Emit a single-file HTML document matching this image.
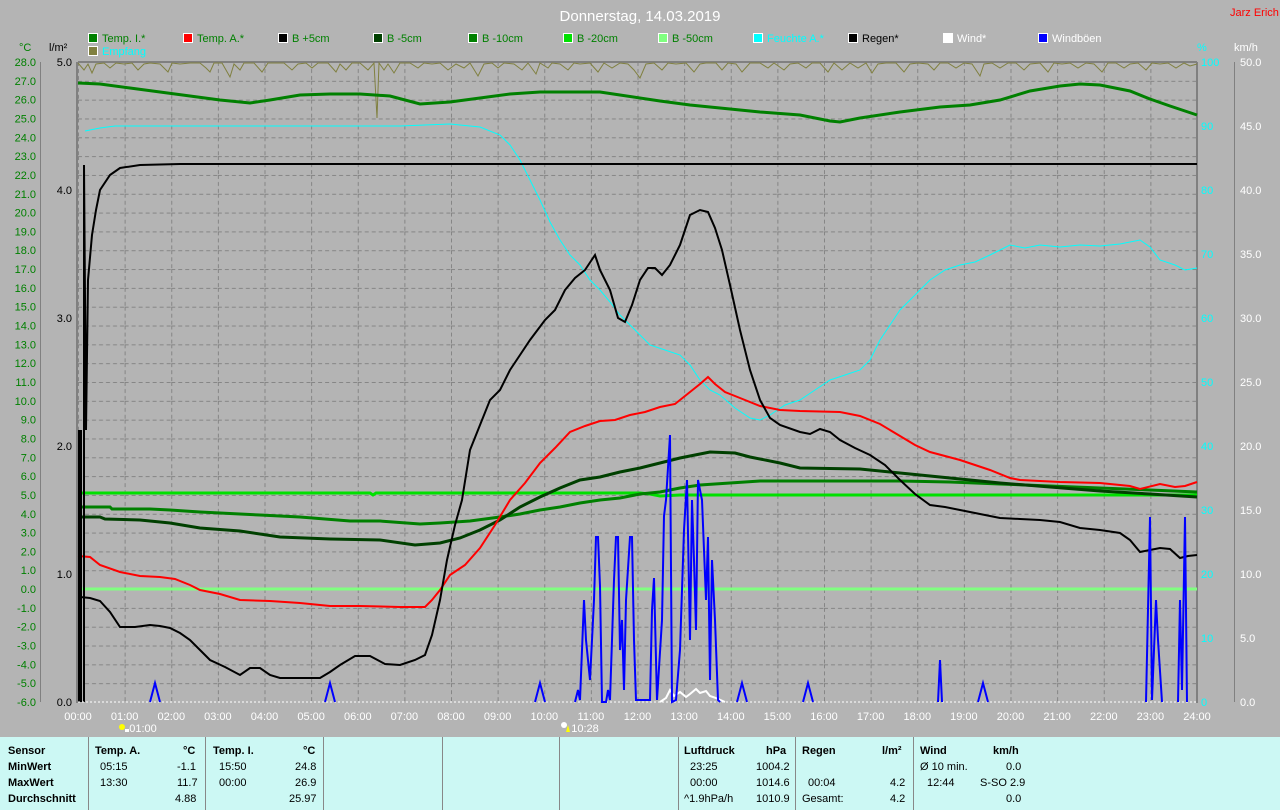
<!DOCTYPE html>
<html><head><meta charset="utf-8"><style>
html,body{margin:0;padding:0;background:#b4b4b4;width:1280px;height:810px;overflow:hidden}
svg{display:block;font-family:"Liberation Sans",sans-serif}
.tb{position:absolute;left:0;top:737px;width:1280px;height:73px;background:#ccf8f4;font-family:"Liberation Sans",sans-serif;font-size:11px;color:#000}
.tb div{position:absolute;white-space:nowrap}
.b{font-weight:bold}
.sep{position:absolute;top:0;width:1px;height:73px;background:#888}
</style></head><body>
<svg width="1280" height="737" viewBox="0 0 1280 737">
<defs>
<pattern id="g" x="78" y="62" width="46.625" height="18.8235" patternUnits="userSpaceOnUse">
<line x1="0" y1="0.5" x2="46.625" y2="0.5" stroke="#858585" stroke-dasharray="4,3"/>
<line x1="0.5" y1="0" x2="0.5" y2="18.8235" stroke="#858585" stroke-dasharray="4,3"/>
</pattern>
</defs>
<rect width="1280" height="737" fill="#b4b4b4"/>
<rect x="78" y="62" width="1119" height="640" fill="url(#g)"/>
<text x="640" y="21" fill="#fff" font-size="15" text-anchor="middle">Donnerstag, 14.03.2019</text>
<text x="1230" y="16" fill="#f00" font-size="11">Jarz Erich</text>
<g font-size="11">
<rect x="88.5" y="33.5" width="9" height="9" fill="#008000" stroke="#fff"/><text x="102" y="42" fill="#008000">Temp. I.*</text>
<rect x="183.5" y="33.5" width="9" height="9" fill="#f00" stroke="#fff"/><text x="197" y="42" fill="#008000">Temp. A.*</text>
<rect x="278.5" y="33.5" width="9" height="9" fill="#000" stroke="#fff"/><text x="292" y="42" fill="#008000">B +5cm</text>
<rect x="373.5" y="33.5" width="9" height="9" fill="#004000" stroke="#fff"/><text x="387" y="42" fill="#008000">B -5cm</text>
<rect x="468.5" y="33.5" width="9" height="9" fill="#008000" stroke="#fff"/><text x="482" y="42" fill="#008000">B -10cm</text>
<rect x="563.5" y="33.5" width="9" height="9" fill="#00e000" stroke="#fff"/><text x="577" y="42" fill="#008000">B -20cm</text>
<rect x="658.5" y="33.5" width="9" height="9" fill="#80ff80" stroke="#fff"/><text x="672" y="42" fill="#008000">B -50cm</text>
<rect x="753.5" y="33.5" width="9" height="9" fill="#0ff" stroke="#fff"/><text x="767" y="42" fill="#0ff">Feuchte A.*</text>
<rect x="848.5" y="33.5" width="9" height="9" fill="#000" stroke="#fff"/><text x="862" y="42" fill="#000">Regen*</text>
<rect x="943.5" y="33.5" width="9" height="9" fill="#fff" stroke="#fff"/><text x="957" y="42" fill="#fff">Wind*</text>
<rect x="1038.5" y="33.5" width="9" height="9" fill="#00f" stroke="#fff"/><text x="1052" y="42" fill="#fff">Windböen</text>
<rect x="88.5" y="46.5" width="9" height="9" fill="#808040" stroke="#fff"/><text x="102" y="55" fill="#0ff">Empfang</text>
<text x="19" y="51" fill="#008000">°C</text>
<text x="49" y="51" fill="#000">l/m²</text>
<text x="1197" y="51" fill="#0ff">%</text>
<text x="1234" y="51" fill="#fff">km/h</text>
</g>
<!-- axes -->
<line x1="40.5" y1="62" x2="40.5" y2="702" stroke="#808080"/>
<line x1="77" y1="62" x2="77" y2="703" stroke="#808080" stroke-width="2"/>
<line x1="78" y1="62" x2="1197" y2="62" stroke="#808080" stroke-width="2"/>
<line x1="1197" y1="62" x2="1197" y2="703" stroke="#808080" stroke-width="2"/>
<line x1="1234.5" y1="62" x2="1234.5" y2="702" stroke="#808080"/>
<g font-size="11" fill="#008000" text-anchor="end">
<text x="36" y="66">28.0</text><text x="36" y="84.8">27.0</text><text x="36" y="103.6">26.0</text><text x="36" y="122.5">25.0</text><text x="36" y="141.3">24.0</text><text x="36" y="160.1">23.0</text><text x="36" y="178.9">22.0</text><text x="36" y="197.8">21.0</text><text x="36" y="216.6">20.0</text><text x="36" y="235.4">19.0</text><text x="36" y="254.2">18.0</text><text x="36" y="273.1">17.0</text><text x="36" y="291.9">16.0</text><text x="36" y="310.7">15.0</text><text x="36" y="329.5">14.0</text><text x="36" y="348.4">13.0</text><text x="36" y="367.2">12.0</text><text x="36" y="386">11.0</text><text x="36" y="404.8">10.0</text><text x="36" y="423.6">9.0</text><text x="36" y="442.5">8.0</text><text x="36" y="461.3">7.0</text><text x="36" y="480.1">6.0</text><text x="36" y="498.9">5.0</text><text x="36" y="517.8">4.0</text><text x="36" y="536.6">3.0</text><text x="36" y="555.4">2.0</text><text x="36" y="574.2">1.0</text><text x="36" y="593.1">0.0</text><text x="36" y="611.9">-1.0</text><text x="36" y="630.7">-2.0</text><text x="36" y="649.5">-3.0</text><text x="36" y="668.4">-4.0</text><text x="36" y="687.2">-5.0</text><text x="36" y="706">-6.0</text>
</g>
<g font-size="11" fill="#000" text-anchor="end">
<text x="72" y="66">5.0</text><text x="72" y="194">4.0</text><text x="72" y="322">3.0</text><text x="72" y="450">2.0</text><text x="72" y="578">1.0</text><text x="72" y="706">0.0</text>
</g>
<g font-size="11" fill="#0ff">
<text x="1201" y="66">100</text><text x="1201" y="130">90</text><text x="1201" y="194">80</text><text x="1201" y="258">70</text><text x="1201" y="322">60</text><text x="1201" y="386">50</text><text x="1201" y="450">40</text><text x="1201" y="514">30</text><text x="1201" y="578">20</text><text x="1201" y="642">10</text><text x="1201" y="706">0</text>
</g>
<g font-size="11" fill="#fff">
<text x="1240" y="66">50.0</text><text x="1240" y="130">45.0</text><text x="1240" y="194">40.0</text><text x="1240" y="258">35.0</text><text x="1240" y="322">30.0</text><text x="1240" y="386">25.0</text><text x="1240" y="450">20.0</text><text x="1240" y="514">15.0</text><text x="1240" y="578">10.0</text><text x="1240" y="642">5.0</text><text x="1240" y="706">0.0</text>
</g>
<g font-size="11" fill="#fff" text-anchor="middle">
<text x="78" y="720">00:00</text><text x="124.6" y="720">01:00</text><text x="171.3" y="720">02:00</text><text x="217.9" y="720">03:00</text><text x="264.5" y="720">04:00</text><text x="311.1" y="720">05:00</text><text x="357.8" y="720">06:00</text><text x="404.4" y="720">07:00</text><text x="451" y="720">08:00</text><text x="497.6" y="720">09:00</text><text x="544.3" y="720">10:00</text><text x="590.9" y="720">11:00</text><text x="637.5" y="720">12:00</text><text x="684.1" y="720">13:00</text><text x="730.8" y="720">14:00</text><text x="777.4" y="720">15:00</text><text x="824" y="720">16:00</text><text x="870.6" y="720">17:00</text><text x="917.3" y="720">18:00</text><text x="963.9" y="720">19:00</text><text x="1010.5" y="720">20:00</text><text x="1057.1" y="720">21:00</text><text x="1103.8" y="720">22:00</text><text x="1150.4" y="720">23:00</text><text x="1197" y="720">24:00</text>
<text x="143" y="732">01:00</text><text x="585" y="732">10:28</text>
</g>
<circle cx="122" cy="727" r="3" fill="#ff0"/><rect x="125" y="729" width="4" height="3" fill="#fff"/>
<circle cx="564" cy="725" r="3" fill="#fff"/><path d="M566 732 L568 725 L570 732Z" fill="#ff0"/>
<!-- Empfang -->
<polyline fill="none" stroke="#808040" stroke-width="1" points="78,63 84,70 88,64 92,73 96,64 104,63 110,68 116,63 124,64 132,63 138,70 144,64 150,63 160,64 168,72 172,63 180,64 190,63 200,63 206,68 210,72 214,63 222,63 230,77 234,64 240,70 244,63 254,63 262,72 268,63 274,63 284,63 292,70 298,64 306,63 312,68 318,63 328,63 336,72 340,64 346,70 352,63 360,63 368,70 374,63 377,118 379,63 384,70 388,64 394,73 400,63 410,63 418,68 424,63 432,64 440,63 448,70 456,64 464,68 470,63 478,76 484,64 492,63 498,68 504,63 514,64 522,70 528,63 536,74 540,63 548,68 552,63 560,64 568,70 574,63 580,64 590,63 598,72 604,63 612,68 620,63 628,64 634,70 640,78 646,64 654,63 662,70 668,63 676,64 686,63 694,72 700,64 706,63 716,63 722,70 728,63 736,64 742,72 750,63 760,63 768,68 774,63 784,70 790,64 798,63 806,68 812,63 820,63 828,72 834,63 842,70 850,63 858,68 866,63 872,73 878,64 886,63 896,63 904,72 910,64 918,63 928,64 934,70 940,63 948,63 956,68 964,63 972,64 980,76 984,64 992,63 1000,68 1008,63 1016,63 1024,70 1030,64 1040,63 1048,72 1054,63 1062,64 1070,63 1078,68 1086,63 1094,64 1102,72 1108,63 1116,63 1124,68 1130,64 1138,63 1146,70 1152,63 1160,64 1168,63 1176,68 1184,63 1190,66 1197,64"/>
<!-- Feuchte -->
<polyline fill="none" stroke="#0ff" stroke-width="1" points="85,131 100,128 115,126 200,126 300,126 400,126 450,124 480,127 500,135 510,145 520,160 530,180 540,200 550,222 560,240 570,255 580,265 590,280 600,290 610,302 620,315 635,330 650,345 665,350 680,355 690,365 700,380 710,390 720,395 735,408 750,418 760,420 770,415 785,405 800,400 815,390 830,380 845,375 860,370 870,360 880,340 890,325 900,310 915,295 930,280 945,270 960,265 975,262 990,255 1000,250 1010,245 1025,248 1040,245 1060,247 1080,245 1100,246 1120,244 1140,240 1150,247 1160,260 1175,265 1185,270 1197,268"/>
<!-- B -50cm -->
<line x1="78" y1="589" x2="1197" y2="589" stroke="#80ff80" stroke-width="3"/>
<!-- B -20cm -->
<polyline fill="none" stroke="#00e000" stroke-width="3" points="78,493 370,493 373,495 376,493 640,493 650,494 660,496 680,495 1197,495"/>
<!-- B -10cm -->
<polyline fill="none" stroke="#008000" stroke-width="3" points="78,507 110,507 112,509 150,509 170,510 200,512 240,514 260,515 300,517 350,521 380,521 420,524 440,523 470,521 500,517 520,514 540,510 560,507 580,503 600,500 620,498 640,494 660,492 680,488 700,485 730,483 760,481 800,481 900,481 950,482 1000,484 1050,486 1100,488 1150,490 1197,492"/>
<!-- B -5cm -->
<polyline fill="none" stroke="#004000" stroke-width="3" points="78,517 100,517 105,519 140,520 170,523 200,528 240,531 280,537 330,539 380,540 415,545 440,543 460,538 480,530 500,520 520,507 540,497 560,488 580,480 600,477 620,472 640,468 660,463 680,458 700,454 710,452 735,453 750,457 780,463 800,468 860,469 900,473 950,478 1000,483 1050,487 1100,491 1150,494 1197,497"/>
<!-- Temp I -->
<polyline fill="none" stroke="#008000" stroke-width="3" points="78,83 100,84 130,88 160,92 190,96 220,100 250,103 270,100 300,95 330,94 360,94 390,96 420,104 450,102 480,98 510,94 540,92 600,92 620,95 660,101 690,105 720,108 760,112 800,115 830,121 840,122 860,118 900,112 940,107 970,105 1000,100 1030,91 1060,86 1080,84 1100,85 1130,91 1150,99 1170,106 1197,115"/>
<!-- Temp A -->
<polyline fill="none" stroke="#f00" stroke-width="2" points="78,556 90,557 100,565 120,572 140,576 160,577 175,579 190,585 200,590 220,594 240,600 270,601 300,603 330,606 360,606 400,607 425,607 432,600 440,590 450,575 465,565 480,548 495,525 510,500 525,483 540,463 555,448 570,432 585,426 600,421 615,420 630,415 645,412 660,407 675,404 690,392 700,384 708,377 715,384 725,392 740,398 760,406 780,410 800,411 840,412 860,416 880,424 900,436 915,445 930,452 960,460 990,470 1010,478 1020,480 1060,482 1100,483 1130,486 1140,489 1160,484 1175,487 1185,486 1197,482"/>
<!-- B +5 / black curve -->
<polyline fill="none" stroke="#000" stroke-width="2" points="80,597 90,598 100,601 110,612 120,627 135,627 150,625 160,626 170,628 180,633 190,640 200,650 210,660 225,667 240,675 250,668 260,668 270,675 280,678 300,678 320,678 330,672 340,665 355,656 370,656 385,664 400,665 415,660 425,655 432,635 440,600 447,560 455,525 462,500 470,450 480,425 490,400 500,390 510,370 520,355 530,340 545,320 555,310 565,290 575,278 585,270 595,255 600,270 610,290 618,318 625,322 632,305 640,280 648,268 655,268 662,275 670,265 680,245 690,215 700,210 708,212 715,228 722,250 730,285 740,330 750,370 760,400 770,418 780,425 800,432 810,434 820,429 830,432 840,440 855,448 870,455 885,465 900,480 915,494 930,505 945,507 960,510 980,514 1000,518 1020,519 1040,520 1060,522 1080,528 1100,530 1120,533 1130,540 1140,552 1150,550 1160,548 1170,549 1180,558 1188,556 1197,555"/>
<!-- Regen -->
<polyline fill="none" stroke="#000" stroke-width="2" points="84,702 84,165 86,430 88,280 92,235 96,210 100,190 110,175 120,168 140,165 180,164 1197,164"/>
<line x1="80" y1="702" x2="80" y2="430" stroke="#000" stroke-width="4"/>
<!-- Wind white -->
<line x1="78" y1="702" x2="1197" y2="702" stroke="#fff" stroke-width="1" stroke-dasharray="2,2"/>
<polyline fill="none" stroke="#fff" stroke-width="2" points="660,702 666,698 670,690 674,696 680,692 686,697 690,694 696,689 700,693 706,691 710,696 716,698 725,702"/>
<!-- Windboeen -->
<g fill="none" stroke="#00f" stroke-width="2">
<polyline points="150,702 155,683 160,702"/>
<polyline points="325,702 330,683 335,702"/>
<polyline points="535,702 540,683 545,702"/>
<polyline points="575,702 578,690 580,700 584,600 586,640 590,680 594,600 596,537 598,537 600,586 602,702 606,702 608,690 610,700 614,580 616,537 618,537 620,650 622,620 624,690 626,600 630,537 632,537 634,640 636,700 650,700 652,610 654,578 657,700 662,620 664,516 666,500 670,435 672,702 676,700 680,650 684,530 687,480 690,640 692,500 694,560 696,630 698,480 702,500 706,600 708,537 710,680 712,560 715,620 718,700 720,702"/>
<polyline points="737,702 742,683 747,702"/>
<polyline points="803,702 808,683 813,702"/>
<polyline points="938,702 940,660 942,702"/>
<polyline points="978,702 983,683 988,702"/>
<polyline points="1146,702 1150,517 1152,700 1156,600 1158,640 1162,702"/>
<polyline points="1178,702 1180,600 1182,690 1185,517 1187,702"/>
</g>
</svg>
<div class="tb">
<div class="sep" style="left:88px"></div><div class="sep" style="left:205px"></div><div class="sep" style="left:323px"></div><div class="sep" style="left:442px"></div><div class="sep" style="left:559px"></div><div class="sep" style="left:678px"></div><div class="sep" style="left:795px"></div><div class="sep" style="left:913px"></div>
<div class="b" style="left:8px;top:8px">Sensor</div>
<div class="b" style="left:8px;top:24px">MinWert</div>
<div class="b" style="left:8px;top:40px">MaxWert</div>
<div class="b" style="left:8px;top:56px">Durchschnitt</div>
<div class="b" style="left:95px;top:8px">Temp. A.</div><div class="b" style="left:183px;top:8px">°C</div>
<div style="left:100px;top:24px">05:15</div><div style="left:177px;top:24px">-1.1</div>
<div style="left:100px;top:40px">13:30</div><div style="left:177px;top:40px">11.7</div>
<div style="left:175px;top:56px">4.88</div>
<div class="b" style="left:213px;top:8px">Temp. I.</div><div class="b" style="left:303px;top:8px">°C</div>
<div style="left:219px;top:24px">15:50</div><div style="left:295px;top:24px">24.8</div>
<div style="left:219px;top:40px">00:00</div><div style="left:295px;top:40px">26.9</div>
<div style="left:289px;top:56px">25.97</div>
<div class="b" style="left:684px;top:8px">Luftdruck</div><div class="b" style="left:766px;top:8px">hPa</div>
<div style="left:690px;top:24px">23:25</div><div style="left:756px;top:24px">1004.2</div>
<div style="left:690px;top:40px">00:00</div><div style="left:756px;top:40px">1014.6</div>
<div style="left:684px;top:56px">^1.9hPa/h</div><div style="left:756px;top:56px">1010.9</div>
<div class="b" style="left:802px;top:8px">Regen</div><div class="b" style="left:882px;top:8px">l/m²</div>
<div style="left:808px;top:40px">00:04</div><div style="left:890px;top:40px">4.2</div>
<div style="left:802px;top:56px">Gesamt:</div><div style="left:890px;top:56px">4.2</div>
<div class="b" style="left:920px;top:8px">Wind</div><div class="b" style="left:993px;top:8px">km/h</div>
<div style="left:920px;top:24px">Ø 10 min.</div><div style="left:1006px;top:24px">0.0</div>
<div style="left:927px;top:40px">12:44</div><div style="left:980px;top:40px">S-SO 2.9</div>
<div style="left:1006px;top:56px">0.0</div>
</div>
</body></html>
